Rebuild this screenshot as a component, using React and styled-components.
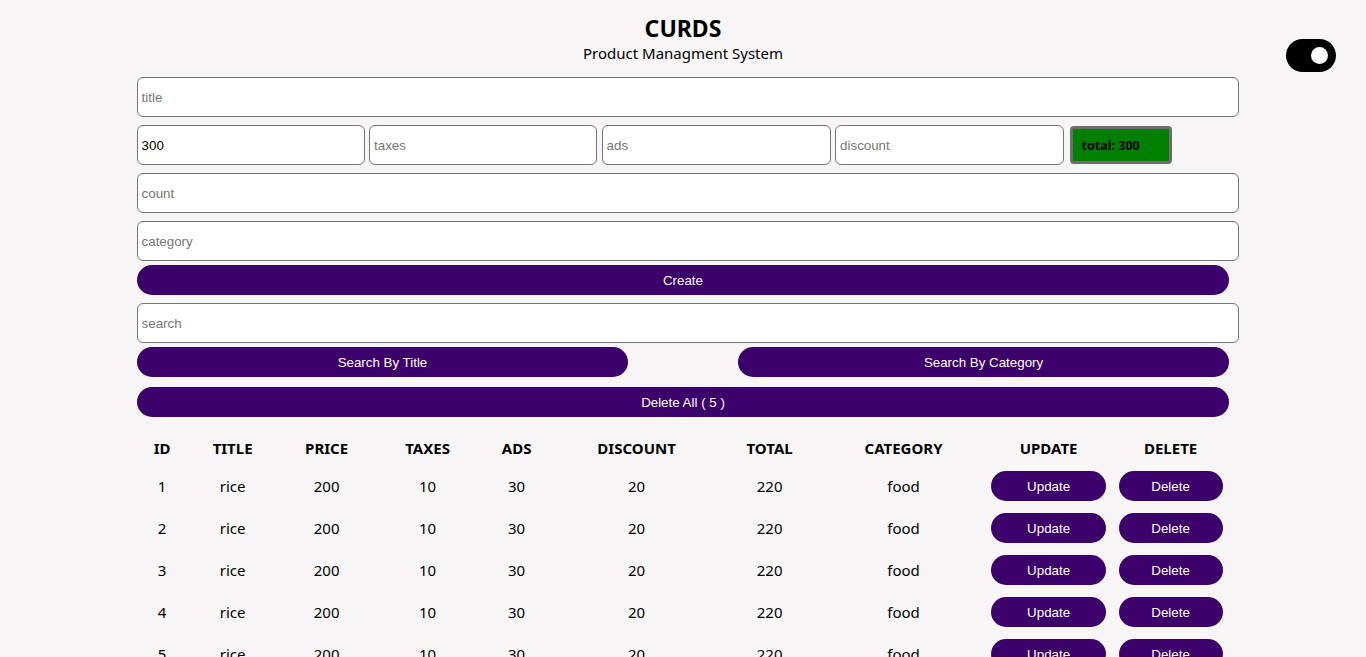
import React from 'react'
import styled, { createGlobalStyle } from 'styled-components'

const GlobalStyle = createGlobalStyle`
	html, body {
		margin: 0;
		padding: 0;
		background: #f8f5f6;
		font-family: "Noto Sans", "Open Sans", sans-serif;
		color: #000;
	}
	* {
		box-sizing: border-box;
	}
`

const purple = '#3c006a'

const Page = styled.div`
	position: relative;
	min-height: 657px;
	padding-top: 12px;
`

const Toggle = styled.div`
	position: absolute;
	top: 39px;
	left: 1286px;
	width: 50px;
	height: 33px;
	border-radius: 17px;
	background: #000;

	&::after {
		content: '';
		position: absolute;
		top: 8px;
		right: 8px;
		width: 17px;
		height: 17px;
		border-radius: 50%;
		background: #fff;
	}
`

const Header = styled.header`
	text-align: center;
	display: flex;
	flex-direction: column;
	align-items: center;
`

const Heading = styled.h1`
	margin: 0;
	font-size: 23px;
	font-weight: 700;
	line-height: 32px;
`

const Subheading = styled.p`
	margin: -1px 0 0;
	font-size: 15px;
	line-height: 20px;
`

const Container = styled.main`
	width: 80%;
	margin: 14px auto 0;
	display: flex;
	flex-direction: column;
`

const Input = styled.input`
	display: block;
	box-sizing: border-box;
	width: ${p => p.$width || 'calc(100% + 10px)'};
	height: 40px;
	padding: 0 4px;
	border: 1px solid #767676;
	border-radius: 6px;
	background: #fff;
	font-family: "Liberation Sans", Arial, sans-serif;
	font-size: 13.33px;
	color: #000;
	margin-top: ${p => p.$mt || 0}px;

	&::placeholder {
		color: #757575;
	}
`

const PriceRow = styled.div`
	display: flex;
	align-items: center;
	gap: 4.5px;
	margin-top: 8px;
`

const Total = styled.small`
	display: flex;
	align-items: center;
	width: 102px;
	height: 38px;
	margin-left: 1px;
	padding-left: 9px;
	background: #008000;
	border: 3px solid #6d6d6d;
	border-radius: 4px;
	font-family: "Noto Sans", sans-serif;
	font-size: 12.5px;
	font-weight: 700;
	color: #000;
`

const Button = styled.button`
	display: block;
	width: ${p => p.$width || '100%'};
	height: 30px;
	margin-top: ${p => p.$mt || 0}px;
	border: none;
	border-radius: 15px;
	background: ${purple};
	color: #fff;
	font-family: "Liberation Sans", Arial, sans-serif;
	font-size: 13.33px;
	cursor: pointer;
`

const SearchButtons = styled.div`
	display: flex;
	justify-content: space-between;
	margin-top: 4px;
`

const Table = styled.div`
	margin-top: 14px;
	display: flex;
	flex-direction: column;
`

const columns = '51px 90px 98px 104px 74px 166px 100px 168px 122px 122px'

const Row = styled.div`
	display: grid;
	grid-template-columns: ${columns};
	align-items: center;
	height: ${p => (p.$head ? 34 : 42)}px;
	font-size: 15px;
	font-weight: ${p => (p.$head ? 700 : 400)};
`

const Cell = styled.div`
	text-align: center;
	display: flex;
	justify-content: center;
`

const SmallButton = styled.button`
	width: ${p => p.$width}px;
	height: 30px;
	border: none;
	border-radius: 15px;
	background: ${purple};
	color: #fff;
	font-family: "Liberation Sans", Arial, sans-serif;
	font-size: 13.33px;
	cursor: pointer;
`

const headers = ['ID', 'TITLE', 'PRICE', 'TAXES', 'ADS', 'DISCOUNT', 'TOTAL', 'CATEGORY', 'UPDATE', 'DELETE']

const products = [1, 2, 3, 4, 5].map(id => ({
	id,
	title: 'rice',
	price: 200,
	taxes: 10,
	ads: 30,
	discount: 20,
	total: 220,
	category: 'food',
}))

const App = () => (
	<Page>
		<GlobalStyle />
		<Toggle />
		<Header>
			<Heading>CURDS</Heading>
			<Subheading>Product Managment System</Subheading>
		</Header>
		<Container>
			<Input placeholder="title" />
			<PriceRow>
				<Input $width="228px" defaultValue="300" />
				<Input $width="228px" placeholder="taxes" />
				<Input $width="229px" placeholder="ads" />
				<Input $width="229px" placeholder="discount" />
				<Total>total: 300</Total>
			</PriceRow>
			<Input $mt={8} placeholder="count" />
			<Input $mt={8} placeholder="category" />
			<Button $mt={4}>Create</Button>
			<Input $mt={8} placeholder="search" />
			<SearchButtons>
				<Button $width="45%">Search By Title</Button>
				<Button $width="45%">Search By Category</Button>
			</SearchButtons>
			<Button $mt={10}>Delete All ( 5 )</Button>
			<Table>
				<Row $head>
					{headers.map(h => (
						<Cell key={h}>{h}</Cell>
					))}
				</Row>
				{products.map(p => (
					<Row key={p.id}>
						<Cell>{p.id}</Cell>
						<Cell>{p.title}</Cell>
						<Cell>{p.price}</Cell>
						<Cell>{p.taxes}</Cell>
						<Cell>{p.ads}</Cell>
						<Cell>{p.discount}</Cell>
						<Cell>{p.total}</Cell>
						<Cell>{p.category}</Cell>
						<Cell>
							<SmallButton $width={115}>Update</SmallButton>
						</Cell>
						<Cell>
							<SmallButton $width={104}>Delete</SmallButton>
						</Cell>
					</Row>
				))}
			</Table>
		</Container>
	</Page>
)

export default App
